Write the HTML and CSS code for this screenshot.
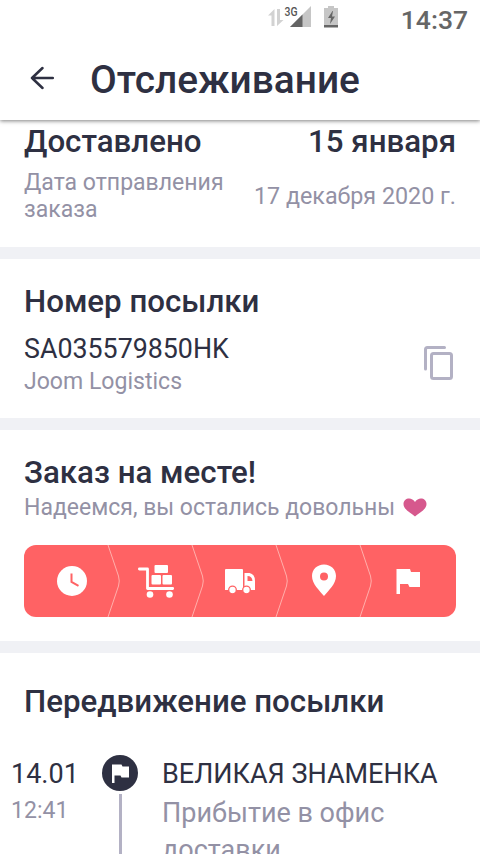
FILE: index.html
```html
<!DOCTYPE html>
<html lang="ru">
<head>
<meta charset="utf-8">
<title>Отслеживание</title>
<link rel="stylesheet" href="styles.css">
</head>
<body>
<div class="screen">
  <header class="header">
    <div class="status">
      <svg class="status-icons" width="80" height="30" viewBox="0 0 80 30">
        <path d="M6.500 26V9L0 15.500h3.500V26zM9 9v17l6.500-6H12V9z" fill="#d2d2d2"/>
        <path d="M43 6v21H22z" fill="#c6c6c6"/>
        <path d="M34.500 14.500V27H22z" fill="#646464"/>
        <path d="M56 8h4V6h6v2h4v19H56z" fill="#c6c6c6"/>
        <path d="M56 25h14v2.500H56zM64.500 11l-4.500 7h3l-1 6 5-7.500h-3l1-5.500z" fill="#666"/>
        <text x="16.500" y="15.500" class="network" textLength="13" lengthAdjust="spacingAndGlyphs">3G</text>
      </svg>
      <span class="clock">14:37</span>
    </div>
    <div class="toolbar">
      <svg class="back" width="24" height="24" viewBox="0 0 24 24"><path d="M22.800 12H2M12.500 2 2 12l10.500 10" fill="none" stroke="#2e3042" stroke-width="2.500" stroke-linecap="round" stroke-linejoin="round"/></svg>
      <h1>Отслеживание</h1>
    </div>
  </header>
  <main>
    <section class="card summary">
      <div class="row heading"><span>Доставлено</span><span>15 января</span></div>
      <div class="row muted dates"><span class="sent">Дата отправления заказа</span><span class="date">17 декабря 2020 г.</span></div>
    </section>
    <section class="card parcel">
      <div>
        <h2 class="heading">Номер посылки</h2>
        <p class="code">SA035579850HK</p>
        <p class="muted carrier">Joom Logistics</p>
      </div>
      <svg class="copy" width="30" height="34" viewBox="0 0 30 34"><g fill="none" stroke="#b3b1c4" stroke-width="3" stroke-linecap="round" stroke-linejoin="round"><path d="M1.500 23V3.500q0-2 2-2h17"/><rect x="7.500" y="7.500" width="20" height="25" rx="2"/></g></svg>
    </section>
    <section class="card place">
      <h2 class="heading">Заказ на месте!</h2>
      <p class="muted wish">Надеемся, вы остались довольны <svg class="heart" width="24" height="19" viewBox="0 0 24 19"><path d="M12 18.500C8 15 0.500 11.500 0.500 6 0.500-0.500 9-1.500 12 4c3-5.500 11.500-4.500 11.500 2 0 5.500-7.500 9-11.500 12.500z" fill="#d6588d"/></svg></p>
      <svg class="steps" width="432" height="72" viewBox="0 0 432 72">
        <rect width="432" height="72" rx="12" fill="#ff6264"/>
        <g fill="none" stroke="#ffb0ac" stroke-width="1">
          <path id="chev" d="M84 0 94.500 31q1.500 5 0 10L84 72"/>
          <use href="#chev" x="84"/><use href="#chev" x="168"/><use href="#chev" x="252"/>
        </g>
        <circle cx="48" cy="36" r="15" fill="#fff"/>
        <path d="M47.500 28.500V37l7 3.800" fill="none" stroke="#ff6264" stroke-width="2"/>
        <g fill="#fff">
          <rect x="130.500" y="20" width="13.500" height="8" rx="1"/>
          <rect x="127.500" y="30" width="9.500" height="9.500" rx="1"/>
          <rect x="138.500" y="30" width="9.500" height="9.500" rx="1"/>
          <circle cx="126" cy="49.500" r="3.300"/><circle cx="145.500" cy="49.500" r="3.300"/>
        </g>
        <path d="M115.400 24h8.100v19.500H148.700" fill="none" stroke="#fff" stroke-width="2.800" stroke-linecap="round" stroke-linejoin="round"/>
        <path d="M202 24h16a1 1 0 0 1 1 1v20h-18V25a1 1 0 0 1 1-1zM220.500 28h5q5.500 1 5.500 8v9h-10.500z" fill="#fff"/>
        <path d="M223.500 31v5h5q-.5-5-5-5z" fill="#ff6264"/>
        <g fill="#fff" stroke="#ff6264" stroke-width="1.300"><circle cx="208.500" cy="45" r="3.800"/><circle cx="222.500" cy="45" r="3.800"/></g>
        <path d="M300 19.500c-7 0-12 5-12 11.500 0 8 7.500 14.500 12 20 4.500-5.500 12-12 12-20 0-6.500-5-11.500-12-11.500zm0 8a4 4 0 1 1 0 8 4 4 0 0 1 0-8z" fill="#fff"/>
        <path d="M372.500 49V24h13.500l1 3H396v15h-10.500l-1.500-3h-8v10z" fill="#fff"/>
      </svg>
    </section>
    <section class="card movement">
      <h2 class="heading">Передвижение посылки</h2>
      <div class="event">
        <div class="when"><p class="day">14.01</p><p class="muted time">12:41</p></div>
        <div class="track">
          <svg width="36" height="36" viewBox="0 0 36 36"><circle cx="18" cy="18" r="18" fill="#2e3042"/><path d="M10 28V9.500h9.500l1 2H27v11h-7.500l-1-2h-6V28z" fill="#fff"/></svg>
          <div class="line"></div>
        </div>
        <div class="what"><p class="town">ВЕЛИКАЯ ЗНАМЕНКА</p><p class="detail">Прибытие в офис доставки</p></div>
      </div>
    </section>
  </main>
</div>
</body>
</html>
```
FILE: styles.css
```css
* { box-sizing: border-box; margin: 0; padding: 0; }
body { font-family: Roboto, "Liberation Sans", sans-serif; color: #2e3042; background: #fff; }
svg { display: block; flex: none; }
.screen { height: 854px; overflow: hidden; display: flex; flex-direction: column; }
.header { height: 120px; flex: none; background: #fff; position: relative; z-index: 1; box-shadow: 0 1px 4px rgba(0,0,0,.5); }
.status { height: 36px; display: flex; justify-content: flex-end; padding-right: 12px; gap: 53px; }
.network { font: 500 12px Roboto, sans-serif; fill: #555; }
.clock { font-size: 26.5px; font-weight: 500; line-height: 40px; color: #666; }
.toolbar { height: 84px; display: flex; align-items: center; padding-left: 30px; gap: 36px; }
h1 { font-size: 38.85px; font-weight: 500; line-height: 46px; padding-top: 3px; }
.heading { font-size: 31.25px; font-weight: 500; line-height: 36px; }
.muted { font-size: 23.05px; line-height: 27px; color: #9391a5; }
main { flex: none; display: flex; flex-direction: column; gap: 12px; background: #f0f1f5; }
.card { background: #fff; padding: 0 24px; }
.row { display: flex; justify-content: space-between; align-items: center; }
.summary { height: 127px; padding-top: 4px; }
.dates { margin-top: 9px; }
.sent { width: 210px; }
.date { font-size: 23.3px; }
.parcel { height: 159px; padding-top: 25px; display: flex; justify-content: space-between; }
.code { font-size: 26.8px; line-height: 32px; margin-top: 13px; }
.carrier { margin-top: 3px; }
.copy { margin: 62px 2px 0 0; }
.place { height: 211px; padding-top: 25px; }
.wish { display: flex; gap: 8px; align-items: center; margin-top: 3px; font-size: 23px; }
.steps { margin-top: 24px; }
.movement { padding-top: 31px; padding-left: 0; }
.movement .heading { padding-left: 24px; }
.event { display: flex; margin-top: 35px; }
.when { width: 102px; padding-left: 11px; }
.day, .town { font-size: 27px; line-height: 36px; padding-top: 1px; }
.time { margin-top: 5px; }
.track { display: flex; flex-direction: column; align-items: center; width: 36px; }
.line { width: 3px; margin-top: 3px; flex: 1; background: #b3b1c4; }
.what { margin-left: 24px; width: 290px; }
.detail { font-size: 27px; line-height: 37px; color: #9391a5; margin-top: 3px; }
```
